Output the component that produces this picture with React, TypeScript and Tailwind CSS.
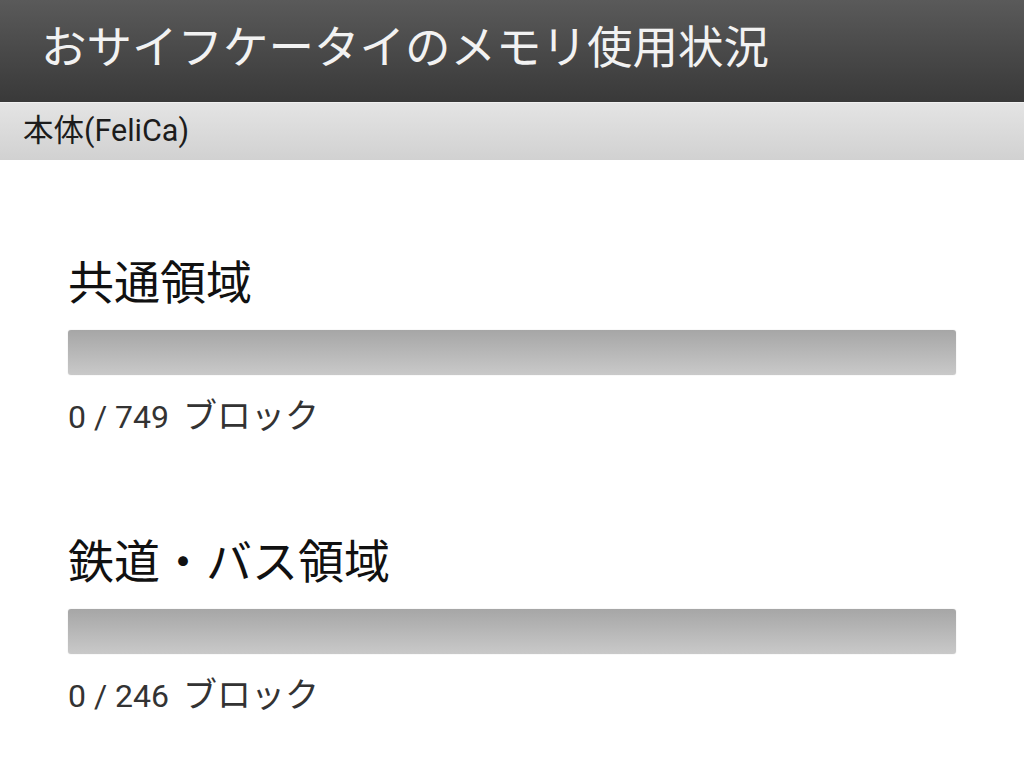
import React from "react";

const JP = '"Roboto", "Noto Sans CJK JP", sans-serif';

function Section({ title, used, total, first }: { title: string; used: number; total: number; first?: boolean }) {
  return (
    <div className={first ? "mt-[97px]" : "mt-[100px]"}>
      <div className="text-[46px] leading-[52px] text-[#111]" style={{ fontFamily: JP }}>
        {title}
      </div>
      <div className="mt-[21px] h-[45px] w-[888px] rounded-[3px] bg-gradient-to-b from-[#a6a6a6] to-[#c9c9c9] shadow-[0_0_1px_rgba(0,0,0,0.25)]" />
      <div className="mt-[22px] flex items-baseline text-[32px] leading-[38px] text-[#333]" style={{ fontFamily: JP }}>
        <span>{used} / {total}</span>
        <span className="ml-[14px] text-[34px]">ブロック</span>
      </div>
    </div>
  );
}

export default function App() {
  return (
    <div className="w-[1024px] h-[782px] overflow-hidden bg-white" style={{ fontFamily: JP }}>
      <div className="h-[102px] bg-gradient-to-b from-[#5a5a5a] to-[#393939] flex items-center pl-[41px]">
        <span className="text-[45.5px] leading-none text-[#f2f2f2] -mt-[5px]">おサイフケータイのメモリ使用状況</span>
      </div>
      <div className="h-[58px] border-t border-[#f0f0f0] bg-gradient-to-b from-[#e4e4e4] to-[#d1d1d1] flex items-center pl-[23px]">
        <span className="text-[30.5px] leading-none text-[#1c1c1c] -mt-[1px]">本体(FeliCa)</span>
      </div>
      <div className="pl-[68px]">
        <Section title="共通領域" used={0} total={749} first />
        <Section title="鉄道・バス領域" used={0} total={246} />
      </div>
    </div>
  );
}
